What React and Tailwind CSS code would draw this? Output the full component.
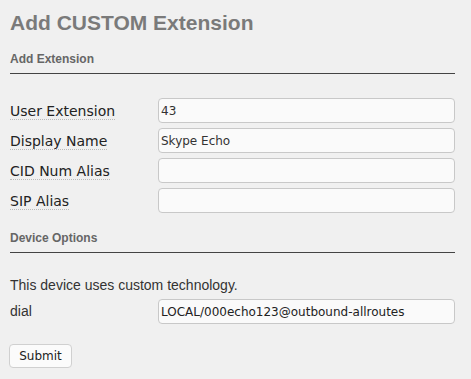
export default function App() {
  const fields = [
    { label: 'User Extension', value: '43' },
    { label: 'Display Name', value: 'Skype Echo' },
    { label: 'CID Num Alias', value: '' },
    { label: 'SIP Alias', value: '' },
  ];

  return (
    <div className="min-h-screen w-[471px] h-[379px] bg-[#f0f0f0] pl-[10px] pt-[9px] font-['Liberation_Sans',Arial,sans-serif] text-[#333]">
      <h2 className="text-[21px] leading-[28px] font-bold text-[#7a7a7a]">Add CUSTOM Extension</h2>

      {/* section: add extension */}
      <div className="mt-[14px] w-[445px] border-b border-[#444] pb-[6px] text-[12px] leading-[16px] font-bold text-[#666]">
        Add Extension
      </div>

      <div className="mt-[24px] flex flex-col gap-[5px]">
        {fields.map((f) => (
          <div key={f.label} className="flex items-center h-[25px]">
            <div className="w-[148px]">
              <span className="font-['DejaVu_Sans',Verdana,sans-serif] text-[14px] leading-[18px] text-[#222] border-b border-dotted border-[#bbb]">
                {f.label}
              </span>
            </div>
            <input
              readOnly
              value={f.value}
              className="w-[297px] h-[25px] rounded-[4px] border border-[#c8c8c8] bg-[#fafafa] px-[2px] font-['DejaVu_Sans',Tahoma,sans-serif] text-[12px] text-[#333] outline-none"
            />
          </div>
        ))}
      </div>

      {/* section: device options */}
      <div className="mt-[17px] w-[445px] border-b border-[#444] pb-[6px] text-[12px] leading-[16px] font-bold text-[#666]">
        Device Options
      </div>

      <p className="mt-[23px] text-[14px] leading-[18px] text-[#333]">This device uses custom technology.</p>

      <div className="mt-[5px] flex items-center h-[25px]">
        <div className="w-[148px] text-[14px] text-[#333]">dial</div>
        <input
          readOnly
          value="LOCAL/000echo123@outbound-allroutes"
          className="w-[297px] h-[25px] rounded-[4px] border border-[#c8c8c8] bg-[#fafafa] px-[2px] font-['DejaVu_Sans',Tahoma,sans-serif] text-[12px] text-[#222] outline-none"
        />
      </div>

      <button className="mt-[20px] -ml-[1px] h-[24px] w-[63px] rounded-[4px] border border-[#d0d0d0] bg-[#fbfbfb] font-['DejaVu_Sans',sans-serif] text-[12px] text-[#222]">
        Submit
      </button>
    </div>
  );
}
